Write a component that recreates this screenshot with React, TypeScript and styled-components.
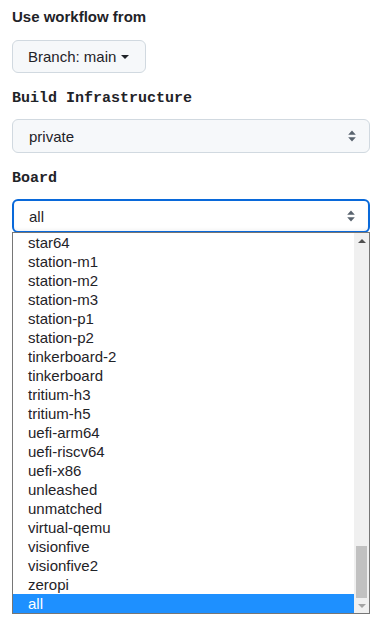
import { ReactElement } from "react";
import styled, { createGlobalStyle } from "styled-components";

const boards = [
  "star64",
  "station-m1",
  "station-m2",
  "station-m3",
  "station-p1",
  "station-p2",
  "tinkerboard-2",
  "tinkerboard",
  "tritium-h3",
  "tritium-h5",
  "uefi-arm64",
  "uefi-riscv64",
  "uefi-x86",
  "unleashed",
  "unmatched",
  "virtual-qemu",
  "visionfive",
  "visionfive2",
  "zeropi",
  "all",
];

function UpDown(): ReactElement {
  return (
    <svg width="8" height="12" viewBox="0 0 8 12">
      <path d="M4 0.5 L7.8 4.8 H0.2 Z" fill="#59636e" />
      <path d="M4 11.5 L7.8 7.2 H0.2 Z" fill="#59636e" />
    </svg>
  );
}

function App(): ReactElement {
  return (
    <>
      <GlobalStyle />
      <Form>
        <Heading>Use workflow from</Heading>
        <BranchButton type="button">
          Branch: main
          <Caret />
        </BranchButton>

        <CodeHeading>Build Infrastructure</CodeHeading>
        <Select>
          <span>private</span>
          <UpDown />
        </Select>

        <CodeHeading>Board</CodeHeading>
        <Select $focused>
          <span>all</span>
          <UpDown />
        </Select>
        <Popup>
          <Options>
            {boards.map((b) => (
              <Option key={b} $selected={b === "all"}>
                {b}
              </Option>
            ))}
          </Options>
          <Scrollbar>
            <Arrow $up />
            <Track>
              <Thumb />
            </Track>
            <Arrow />
          </Scrollbar>
        </Popup>
      </Form>
    </>
  );
}

const GlobalStyle = createGlobalStyle`
  body {
    margin: 0;
    background: #ffffff;
    font-family: "Liberation Sans", Arial, sans-serif;
    color: #1f2328;
  }
`;

const Form = styled.div`
  display: flex;
  flex-direction: column;
  align-items: flex-start;
  padding: 7px 15px 0 12px;
`;

const Heading = styled.div`
  font-size: 15px;
  font-weight: 700;
  line-height: 20px;
  height: 20px;
`;

const CodeHeading = styled(Heading)`
  font-family: "Liberation Mono", "Courier New", monospace;
  margin-top: 16px;
`;

const BranchButton = styled.button`
  margin-top: 13px;
  height: 33px;
  display: flex;
  align-items: center;
  gap: 5px;
  padding: 0 16px 0 15px;
  font-family: "Liberation Sans", Arial, sans-serif;
  font-size: 15px;
  color: #1f2328;
  background: #f6f8fa;
  border: 1px solid #d1d9e0;
  border-radius: 6px;
`;

const Caret = styled.span`
  width: 0;
  height: 0;
  border-left: 4px solid transparent;
  border-right: 4px solid transparent;
  border-top: 4px solid #1f2328;
  margin-top: 1px;
`;

const Select = styled.div<{ $focused?: boolean }>`
  box-sizing: border-box;
  width: 358px;
  height: 34px;
  margin-top: 10px;
  display: flex;
  align-items: center;
  justify-content: space-between;
  padding: 0 13px 0 ${(p) => (p.$focused ? "15px" : "16px")};
  font-size: 15px;
  color: #1f2328;
  background: ${(p) => (p.$focused ? "#ffffff" : "#f6f8fa")};
  border: ${(p) => (p.$focused ? "2px solid #0969da" : "1px solid #d1d9e0")};
  border-radius: 6px;
  box-shadow: ${(p) =>
    p.$focused ? "inset 0 -2px 3px rgba(0,0,0,0.04)" : "none"};
`;

const Popup = styled.div`
  width: 358px;
  box-sizing: border-box;
  display: flex;
  margin-top: -1px;
  background: #ffffff;
  border: 1px solid #767676;
`;

const Options = styled.div`
  flex: 1;
  display: flex;
  flex-direction: column;
`;

const Option = styled.div<{ $selected?: boolean }>`
  height: 19px;
  line-height: 19px;
  padding-left: 15px;
  font-size: 15px;
  color: ${(p) => (p.$selected ? "#ffffff" : "#1f2328")};
  background: ${(p) => (p.$selected ? "#1e90ff" : "transparent")};
`;

const Scrollbar = styled.div`
  width: 15px;
  display: flex;
  flex-direction: column;
  background: #f0f0f0;
`;

const Arrow = styled.div<{ $up?: boolean }>`
  height: 15px;
  display: flex;
  align-items: center;
  justify-content: center;
  &::before {
    content: "";
    width: 0;
    height: 0;
    border-left: 4px solid transparent;
    border-right: 4px solid transparent;
    ${(p) =>
      p.$up
        ? "border-bottom: 4px solid #505050;"
        : "border-top: 4px solid #a3a3a3;"}
  }
`;

const Track = styled.div`
  flex: 1;
  display: flex;
  flex-direction: column;
  justify-content: flex-end;
  align-items: center;
`;

const Thumb = styled.div`
  width: 11px;
  height: 52px;
  background: #c1c1c1;
`;

export default App;
